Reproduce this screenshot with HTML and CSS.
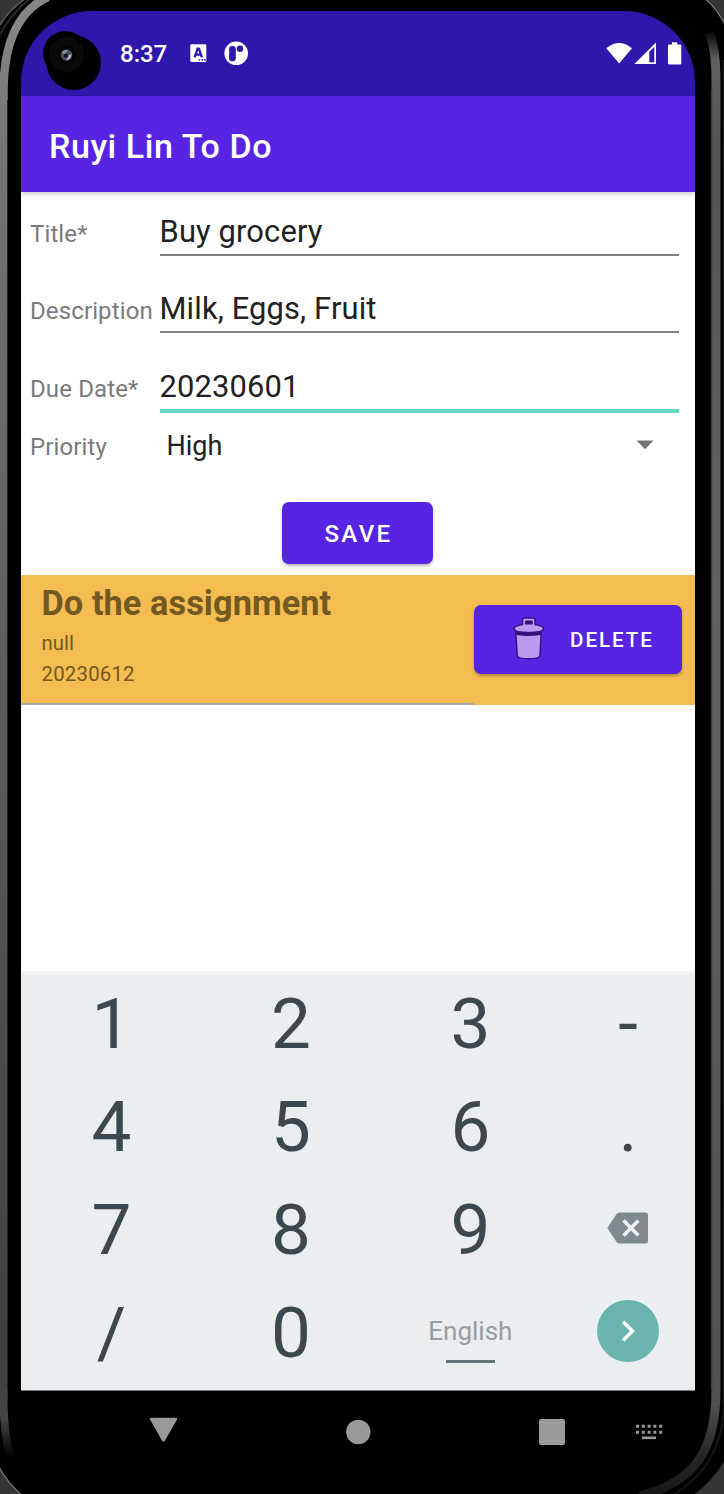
FILE: index.html
```html
<!DOCTYPE html>
<html lang="en">
<head>
<meta charset="utf-8">
<title>Ruyi Lin To Do</title>
<link rel="stylesheet" href="styles.css">
</head>
<body>
<div class="phone">
  <svg class="frame" width="724" height="1494" viewBox="0 0 724 1494" aria-hidden="true">
    <defs>
      <linearGradient id="rimL" gradientUnits="userSpaceOnUse" x1="0" y1="0" x2="0" y2="1494">
        <stop offset="0" stop-color="#888"/><stop offset=".1" stop-color="#747474"/><stop offset=".4" stop-color="#606060"/><stop offset=".9" stop-color="#404040"/><stop offset=".95" stop-color="#444"/><stop offset=".975" stop-color="#000"/>
      </linearGradient>
      <linearGradient id="rimR" gradientUnits="userSpaceOnUse" x1="0" y1="0" x2="0" y2="1494">
        <stop offset=".02" stop-color="#000"/><stop offset=".04" stop-color="#606060"/><stop offset=".1" stop-color="#545454"/><stop offset=".4" stop-color="#636363"/><stop offset=".94" stop-color="#505050"/><stop offset=".97" stop-color="#2a2a2a"/><stop offset="1" stop-color="#181818"/>
      </linearGradient>
    </defs>
    <rect width="724" height="1494" fill="#000"/>
    <g fill="#343537" stroke-width="1.2">
      <path d="M-2-2H27Q10 8 -2 28Z" stroke="#666"/>
      <path d="M704-2Q717 8 726 27V-2Z" stroke="#77787a"/>
      <path d="M-2 1465Q7 1483 23 1496H-2Z" stroke="#77787a"/>
      <path d="M726 1459Q714 1480 693 1496H726Z" stroke="#2c2c2d"/>
    </g>
    <path d="M-2 38Q10 14 31-2" fill="none" stroke="#2a2a2a" stroke-width="2"/>
    <path d="M3.500 1400V90C4 40 20 10 48-3" fill="none" stroke="url(#rimL)" stroke-width="8.500"/>
    <path d="M3.500 1400Q4 1440 12 1460" fill="none" stroke="url(#rimL)" stroke-width="8"/>
    <path d="M7.500 100V1390" stroke="#222" stroke-width="1"/>
    <path d="M709 32Q716 48 716 82V1390C716 1450 695 1482 640 1496" fill="none" stroke="url(#rimR)" stroke-width="9"/>
    <path d="M711.500 90V1390" stroke="#383838" stroke-width="1.500"/>
    <path d="M723.500 60V1410Q722 1465 672 1496" fill="none" stroke="#1d1c1a" stroke-width="1.500"/>
  </svg>

  <main class="screen">
    <header class="status">
      <span class="camera">
        <svg width="60" height="62" viewBox="42 30 60 62">
          <circle cx="65.500" cy="53.500" r="22.500" fill="#000"/><circle cx="73.700" cy="62.700" r="27.300" fill="#000"/>
          <circle cx="66.500" cy="54.500" r="17.500" fill="#0a0a0b"/><circle cx="66.300" cy="55" r="9.500" fill="#040405"/>
          <circle cx="66.500" cy="55" r="5.800" fill="#454d5f"/><path d="M61.500 53Q64 49 68 50.500L64.500 54Z" fill="#8b95a6"/><path d="M71.500 54Q71.500 60 65.500 60.200Q69 57 68.500 55Z" fill="#a8b8d0"/><circle cx="66" cy="55.500" r="2" fill="#11131b"/>
        </svg>
      </span>
      <span class="clock">8:37</span>
      <svg class="ime-icon" width="17" height="19" viewBox="0 0 17 19">
        <rect x=".3" y=".3" width="16" height="17.700" rx="1.200" fill="#fff"/>
        <path d="M4.600 13.300L7.600 4.700H8.900L11.900 13.300M5.900 10.600H10.600" fill="none" stroke="#2f17ab" stroke-width="2.300"/>
        <path d="M8.700 15H10.200V16.500H8.700ZM11.500 15H13V16.500H11.500ZM14.200 15H15.700V16.500H14.200Z" fill="#2f17ab"/>
      </svg>
      <svg class="app-icon" width="25" height="25" viewBox="0 0 25 25">
        <circle cx="12.200" cy="12.300" r="11.800" fill="#fff"/>
        <rect x="5.100" y="5" width="6.700" height="15.200" rx="3" fill="#2f17ab"/><circle cx="16" cy="7.700" r="3.200" fill="#2f17ab"/>
      </svg>
      <svg class="signals" width="78" height="24" viewBox="605 42 78 24" fill="#fff">
        <path d="M606.300 48.200Q619 37.600 632 48.200L619.200 63.600Z"/>
        <path fill-rule="evenodd" d="M634.300 64L656 42.500V64ZM649.300 51.800V62.300H654.300V47Z"/>
        <path d="M672 42.300H677.300V44.500H680Q681.300 44.500 681.300 45.800V63Q681.300 64.500 680 64.500H669.400Q668 64.500 668 63V45.800Q668 44.500 669.400 44.500H672Z"/>
      </svg>
    </header>
    <div class="app-bar"><h1>Ruyi Lin To Do</h1></div>

    <div class="content">
      <form class="form">
        <div class="row"><label>Title*</label><div class="field">Buy grocery</div></div>
        <div class="row"><label>Description</label><div class="field">Milk, Eggs, Fruit</div></div>
        <div class="row"><label>Due Date*</label><div class="field active">20230601</div></div>
        <div class="row priority"><label>Priority</label><div class="select"><span>High</span>
          <svg width="18" height="10" viewBox="0 0 18 10"><path d="M.5.500H17.500L9 9.300Z" fill="#757575"/></svg></div></div>
        <button class="save" type="button">SAVE</button>
      </form>

      <section class="todo">
        <div class="todo-text">
          <h2>Do the assignment</h2>
          <p>null</p>
          <p class="date">20230612</p>
        </div>
        <button class="delete" type="button">
          <svg width="32" height="44" viewBox="0 0 32 44" fill="#b99cf1" stroke="#31127f" stroke-width="1.500" stroke-linejoin="round">
            <path d="M2.800 16L4.200 38.500Q4.600 41.700 15.500 41.700Q26.600 41.700 27 38.500L28.200 16Z"/>
            <path d="M3 16.200Q15 19 28 16.200" stroke-width="3"/>
            <path d="M9.500 7.500V3Q9.500 1 11.500 1H20Q22 1 22 3V7.500Q30.500 9 30.500 11.500Q30.500 15.500 15.700 15.500Q1 15.500 1 11.500Q1 9 9.500 7.500Z"/>
            <path d="M12.700 4.300H18.900V6.800H12.700Z" fill="#31127f"/>
          </svg>
          <span>DELETE</span>
        </button>
      </section>
    </div>

    <section class="keyboard">
      <div class="keys">
        <span>1</span><span>2</span><span>3</span><span>-</span>
        <span>4</span><span>5</span><span>6</span><span>.</span>
        <span>7</span><span>8</span><span>9</span>
        <span><svg class="back-key" width="42" height="32" viewBox="0 0 42 32"><path d="M.3 16L9.600 2Q10.600.500 12.300.500H38.500Q41 .500 41 3V29Q41 31.500 38.500 31.500H12.300Q10.600 31.500 9.600 30Z" fill="#808a8e"/><path d="M16.500 8.500L31.500 23.500M31.500 8.500L16.500 23.500" stroke="#eceff1" stroke-width="3.600"/></svg></span>
        <span>/</span><span>0</span><span class="space"><b>English</b></span>
        <span><svg class="enter" width="62" height="62" viewBox="0 0 62 62"><circle cx="31" cy="31" r="31" fill="#69b4ae"/><path d="M26 21.800L35.500 31L26 40.500" fill="none" stroke="#fff" stroke-width="3.500"/></svg></span>
      </div>
    </section>
    <nav class="nav">
      <svg width="674" height="60" viewBox="21 1400 674 60" fill="#999">
        <path d="M151.500 1417.700H175.700Q178 1417.700 177 1419.600L165 1440.600Q163.500 1443 162 1440.600L150 1419.600Q149 1417.700 151.500 1417.700Z"/>
        <circle cx="358.300" cy="1432" r="12.200"/>
        <rect x="539" y="1419" width="26" height="26" rx="2"/>
        <path d="M636 1426.300H663M636 1432.300H663" stroke="#999" stroke-width="3" stroke-dasharray="3 2.800"/>
        <rect x="642" y="1436.500" width="14" height="2.600"/>
      </svg>
    </nav>
  </main>
</div>
</body>
</html>
```

FILE: styles.css
```css
* { box-sizing: border-box; }
body { margin: 0; font-family: Roboto, "Liberation Sans", sans-serif; background: #000; }
h1, h2, p { margin: 0; }
svg { display: block; flex: none; }
.phone { position: relative; width: 724px; height: 1494px; overflow: hidden; padding: 11px 29px 0 21px; }
.frame { position: absolute; left: 0; top: 0; }
.screen { position: relative; width: 674px; height: 1483px; display: flex; flex-direction: column; border-radius: 71px 71px 0 0; overflow: hidden; }
.status { height: 85px; flex: none; display: flex; align-items: center; background: #2f17ab; color: #fff; padding: 0 12px 0 21px; }
.camera { width: 60px; margin-top: 15px; }
.clock { margin-left: 18px; width: 69.500px; font-size: 24px; font-weight: 500; padding-top: 1px; }
.app-icon { margin-left: 17px; }
.signals { margin-left: auto; }
.app-bar { height: 96px; flex: none; display: flex; align-items: center; padding: 4px 28px 0; background: #5724e3; box-shadow: 0 2px 5px #0003; position: relative; color: #fff; }
h1 { font-size: 34px; font-weight: 500; letter-spacing: .55px; }
.content { flex: 1; background: #fff; }
.form { height: 382.600px; display: flex; flex-direction: column; }
.row { display: flex; align-items: flex-start; height: 77.300px; padding: 0 16px 0 9px; color: #7b7b7b; font-size: 24px; }
.row label { width: 129.500px; padding-top: 28px; flex: none; white-space: nowrap; letter-spacing: .12px; }
.field { flex: 1; height: 64px; padding-top: 21px; font-size: 30.900px; letter-spacing: .13px; color: #212121; border-bottom: 2px solid #7f7f7f; }
.field.active { border-bottom: 4px solid #63d8c8; height: 66px; }
.priority { height: 78px; }
.priority label { padding-top: 9px; }
.select { flex: 1; height: 43px; display: flex; align-items: center; justify-content: space-between; padding: 2px 25px 0 7px; font-size: 27px; color: #212121; }
.select svg { margin-top: -2px; }
button { border: 0; font-family: inherit; font-weight: 500; color: #fff; background: #5724e3; border-radius: 7px; box-shadow: 0 2px 3px #0004; padding: 0; }
.save { width: 151px; height: 62px; flex: none; align-self: center; font-size: 24px; letter-spacing: 2.400px; padding: 3px 0 0 2px; margin-right: 1px; }
.todo { height: 130px; display: flex; background: #f5bc51; color: #725821; }
.todo-text { width: 452.500px; padding: 8px 0 0 20.500px; border-bottom: 2px solid #aaa; }
.todo h2 { font-size: 34.300px; line-height: 40px; font-weight: 700; letter-spacing: .07px; }
.todo p { font-size: 20.400px; line-height: 31px; padding-top: 5px; height: 31px; }
.todo .date { letter-spacing: .2px; }
.delete { width: 208px; height: 69px; margin-top: 30px; display: flex; align-items: center; font-size: 20.600px; letter-spacing: 1.940px; padding-left: 39.500px; }
.delete span { margin-left: 25px; padding-top: 2px; }
.keyboard { height: 417px; flex: none; background: #eaeef1; border-bottom: 1px solid #777; box-shadow: 0 -3px 0 #f5f6f7; }
.keys { display: grid; grid-template-columns: 179.500px 179.500px 179.500px 1fr; grid-auto-rows: 103px; margin: -2.500px -1px 0 .6px; font-size: 71px; color: #3c484e; }
.keys > span { display: flex; align-items: center; justify-content: center; }
.back-key, .enter { margin-bottom: 2px; }
.keys .space { flex-direction: column; font-size: 26px; color: #969ca0; padding-top: 14px; }
.space b { font-weight: 400; }
.space::after { content: ""; width: 49px; height: 3px; background: #657177; margin-top: 14px; }
.nav { height: 103px; flex: none; padding-top: 9px; }
```
